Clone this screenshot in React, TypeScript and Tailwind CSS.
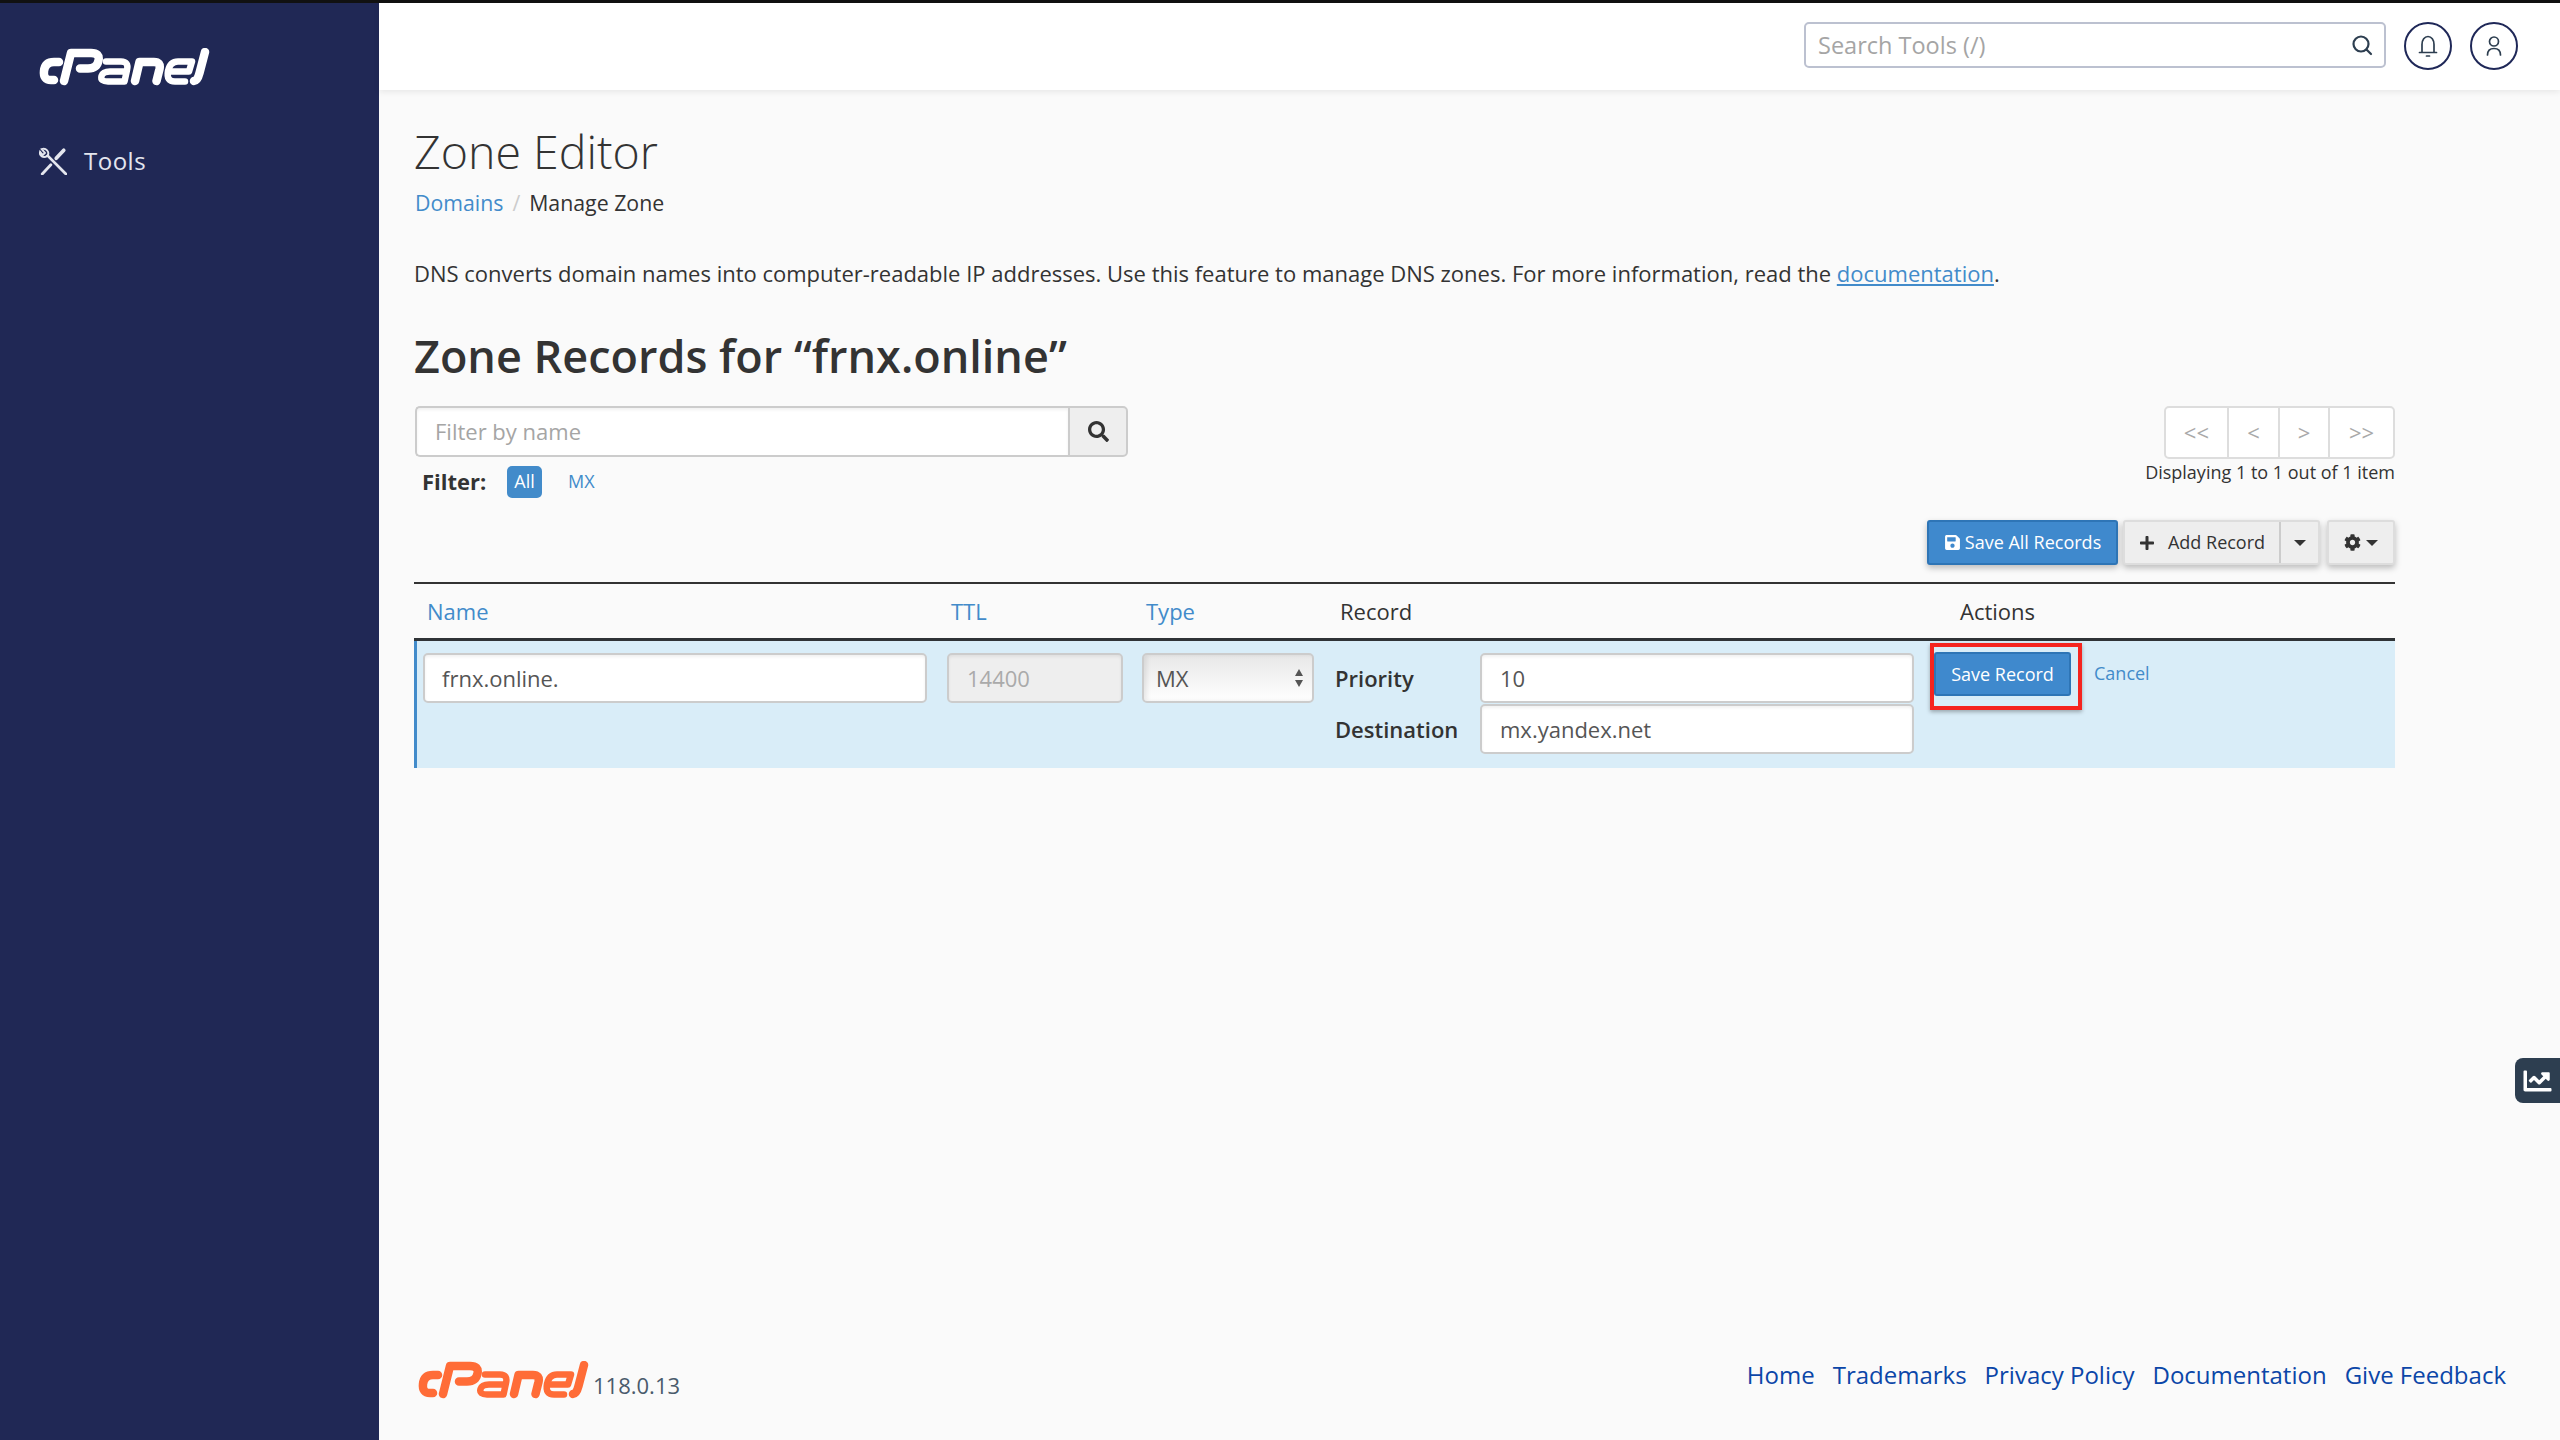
import { FaChartLine, FaCog, FaPlus, FaSave, FaSearch } from "react-icons/fa";

// hand drawn cPanel wordmark, sized for 171x38
function CpanelLogo({ color }: { color: string }) {
  return (
    <svg viewBox="0 0 171 38" className="w-[171px] h-[38px]" role="img" aria-label="cPanel">
      <g fill="none" stroke={color} strokeWidth="8.5" strokeLinecap="round" strokeLinejoin="round">
        {/* c */}
        <path d="M20 14 H15 Q6 14 5 23 Q4 32 12 32 H15" />
        {/* P */}
        <path d="M25 33 L32 5 H52 Q61 5 59.5 12.5 Q58 20.5 49 20.5 H41" />
        {/* a */}
        <path d="M67 13.5 H82 Q90 13.5 88 22 L85.5 33.5 H69 Q61 33.5 62.5 28 Q64 23.5 71 23.5 H86" strokeWidth="6.5" />
        {/* n */}
        <path d="M96 33 L100.5 14 H115 Q122 14 120.5 21 L117.5 33" />
        {/* e */}
        <path d="M153 13.5 H139 Q131 13.5 129 23 Q127 33.5 136 33.5 H146 M133 23.5 H150 L153 13.5" strokeWidth="6.5" />
        {/* l */}
        <path d="M166 4 L160.5 25 Q158.5 33 155 33" />
      </g>
    </svg>
  );
}

function Pager() {
  const items = [
    { label: "<<", w: "w-[64px]" },
    { label: "<", w: "w-[52px]" },
    { label: ">", w: "w-[51px]" },
    { label: ">>", w: "w-[64px]" },
  ];
  return (
    <div className="flex w-[231px] h-[53px] bg-white border-2 border-[#ddd] rounded-[5px]">
      {items.map((it, i) => (
        <div
          key={i}
          className={`${it.w} flex items-center justify-center text-[22px] text-[#a9a9a9] ${i < 3 ? "border-r-2 border-[#ddd]" : ""}`}
        >
          {it.label}
        </div>
      ))}
    </div>
  );
}

export default function App() {
  return (
    <div className="w-[2560px] h-[1440px] flex flex-col overflow-hidden bg-[#fafafa] font-['Open_Sans',sans-serif] text-[#333] relative">
      <div className="h-[3px] bg-[#111] shrink-0" />
      <div className="flex flex-1 min-h-0">
        {/* sidebar */}
        <div className="w-[379px] shrink-0 bg-[#202855] flex flex-col pl-[39px] pt-[45px]">
          <CpanelLogo color="#ffffff" />
          <div className="flex items-center mt-[57px] text-[#e4e6ee] text-[24px] tracking-[0.5px]">
            <svg viewBox="0 0 26 26" className="w-[28px] h-[28px] mr-[17px]" fill="none" stroke="#e4e6ee" strokeWidth="2.6" strokeLinecap="round">
              <path d="M3 25 L11 16.5" />
              <path d="M16 10.5 L23 3" strokeWidth="3.4" />
              <path d="M25 25 L8 8" />
              <path d="M8 8 C10 4.5 6.5 0.5 2.5 2 L5.5 5.5 L3.5 7.5 L1 4.5 C0 8 4 11 8 8 Z" strokeWidth="1.8" />
            </svg>
            Tools
          </div>
        </div>

        <div className="flex-1 flex flex-col min-w-0">
          {/* top bar */}
          <div className="h-[87px] shrink-0 bg-white shadow-[0_2px_6px_rgba(0,0,0,0.08)] flex items-start pt-[19px] pl-[1425px]">
            <div className="w-[582px] h-[46px] rounded-[5px] border-2 border-[#bcc1d0] flex items-center justify-between pl-[12px] pr-[11px]">
              <span className="text-[23.5px] text-[#a5a5a5] pt-[2px]">Search Tools (/)</span>
              <svg viewBox="0 0 22 22" className="w-[22px] h-[22px]" fill="none" stroke="#2d3e50" strokeWidth="2.2" strokeLinecap="round">
                <circle cx="10" cy="10" r="7.5" />
                <path d="M15.5 15.5 L20 20" />
              </svg>
            </div>
            <div className="w-[48px] h-[48px] rounded-full border-2 border-[#1f2858] flex items-center justify-center ml-[18px]">
              <svg viewBox="0 0 24 24" className="w-[24px] h-[24px]" fill="none" stroke="#2d3e50" strokeWidth="1.7" strokeLinecap="round" strokeLinejoin="round">
                <path d="M6 18 V10.5 C6 6 8.5 2.5 12 2.5 C15.5 2.5 18 6 18 10.5 V18 M3.5 18.5 H20.5 M10.5 22 H13.5" />
              </svg>
            </div>
            <div className="w-[48px] h-[48px] rounded-full border-2 border-[#1f2858] flex items-center justify-center ml-[18px]">
              <svg viewBox="0 0 24 24" className="w-[24px] h-[24px]" fill="none" stroke="#2d3e50" strokeWidth="1.7" strokeLinecap="round">
                <circle cx="12" cy="7.5" r="4.5" />
                <path d="M5.5 21 C5.5 17 8 14.5 12 14.5 C16 14.5 18.5 17 18.5 21" />
              </svg>
            </div>
          </div>

          {/* page body */}
          <div className="flex-1 flex flex-col pl-[35px] pr-[165px] relative">
            <h1 className="text-[46.5px] font-light leading-[60px] mt-[31px] text-[#333]">Zone Editor</h1>
            <div className="flex items-center text-[21.3px] leading-[30px] mt-[7px] ml-[1px]">
              <span className="text-[#428bca]">Domains</span>
              <span className="text-[#ccc] mx-[9px]">/</span>
              <span className="text-[#333]">Manage Zone</span>
            </div>
            <p className="text-[22px] leading-[30px] mt-[40px]">
              DNS converts domain names into computer-readable IP addresses. Use this feature to manage DNS zones. For more information, read the{" "}
              <span className="text-[#428bca] underline">documentation</span>.
            </p>
            <h2 className="text-[45px] font-semibold leading-[60px] mt-[38px] text-[#333]">Zone Records for “frnx.online”</h2>

            {/* filter + pager */}
            <div className="flex justify-between mt-[20px] h-[114px]">
              <div>
                <div className="flex w-[713px] h-[51px] ml-[1px]">
                  <div className="w-[653px] bg-white border-2 border-r-0 border-[#ccc] rounded-l-[5px] flex items-center pl-[18px] text-[22px] text-[#a5a5a5] shadow-[inset_0_2px_3px_rgba(0,0,0,0.06)]">
                    Filter by name
                  </div>
                  <div className="flex-1 bg-[#eee] border-2 border-[#ccc] rounded-r-[5px] flex items-center justify-center">
                    <FaSearch className="w-[21px] h-[21px] text-[#333]" />
                  </div>
                </div>
                <div className="flex items-center mt-[8px] ml-[8px]">
                  <span className="text-[22px] font-bold w-[85px]">Filter:</span>
                  <span className="w-[35px] h-[32px] rounded-[5px] bg-[#428bca] text-white text-[18px] flex items-center justify-center">All</span>
                  <span className="ml-[26px] text-[18px] text-[#428bca]">MX</span>
                </div>
              </div>
              <div className="flex flex-col items-end">
                <Pager />
                <div className="text-[18px] leading-[26px]">Displaying 1 to 1 out of 1 item</div>
              </div>
            </div>

            {/* toolbar */}
            <div className="flex justify-end h-[46px] text-[18px]">
              <div className="w-[191px] h-[45px] rounded-[3px] bg-[#3f89cd] border-2 border-[#2e75b6] text-white flex items-center justify-center shadow-[0_3px_6px_rgba(0,0,0,0.25)]">
                <FaSave className="w-[17px] h-[17px] mr-[4px]" />
                Save All Records
              </div>
              <div className="flex ml-[5px] w-[197px] h-[45px] rounded-[3px] bg-[#eee] border-2 border-[#ddd] shadow-[0_3px_6px_rgba(0,0,0,0.25)]">
                <div className="flex-1 flex items-center justify-center border-r-2 border-[#ccc]">
                  <FaPlus className="w-[16px] h-[16px] mr-[13px]" />
                  Add Record
                </div>
                <div className="w-[37px] flex items-center justify-center">
                  <span className="w-0 h-0 border-x-[6px] border-x-transparent border-t-[6px] border-t-[#333]" />
                </div>
              </div>
              <div className="flex items-center justify-center ml-[7px] w-[68px] h-[45px] rounded-[3px] bg-[#eee] border-2 border-[#ddd] shadow-[0_3px_6px_rgba(0,0,0,0.25)]">
                <FaCog className="w-[17px] h-[17px] mr-[5px]" />
                <span className="w-0 h-0 border-x-[6px] border-x-transparent border-t-[6px] border-t-[#333]" />
              </div>
            </div>

            {/* table */}
            <div className="mt-[16px] border-t-2 border-[#333]">
              <div className="flex h-[57px] items-center text-[22px] border-b-[3px] border-[#2f3336]">
                <div className="w-[525px] pl-[13px] text-[#428bca]">Name</div>
                <div className="w-[195px] pl-[12px] text-[#428bca]">TTL</div>
                <div className="w-[193px] pl-[12px] text-[#428bca]">Type</div>
                <div className="w-[626px] pl-[13px]">Record</div>
                <div className="pl-[7px]">Actions</div>
              </div>
              <div className="flex h-[127px] bg-[#d9edf8] border-l-[3px] border-[#428bca] pt-[12px] text-[22px]">
                <div className="w-[524px] pl-[6px]">
                  <div className="w-[504px] h-[50px] bg-white border-2 border-[#ccc] rounded-[5px] flex items-center pl-[17px] text-[#555] shadow-[inset_0_2px_3px_rgba(0,0,0,0.06)]">frnx.online.</div>
                </div>
                <div className="w-[195px] pl-[6px]">
                  <div className="w-[176px] h-[50px] bg-[#eee] border-2 border-[#ccc] rounded-[5px] flex items-center pl-[18px] text-[#aaa] shadow-[inset_0_2px_3px_rgba(0,0,0,0.06)]">14400</div>
                </div>
                <div className="w-[193px] pl-[6px]">
                  <div className="w-[172px] h-[50px] bg-gradient-to-b from-[#e8e8e8] to-white border-2 border-[#ccc] rounded-[5px] flex items-center justify-between pl-[12px] pr-[8px] text-[#555] shadow-[inset_3px_0_4px_rgba(0,0,0,0.08)]">
                    MX
                    <svg viewBox="0 0 10 20" className="w-[10px] h-[20px]" fill="#555">
                      <path d="M5 1 L9 8 H1 Z M5 19 L9 12 H1 Z" />
                    </svg>
                  </div>
                </div>
                <div className="w-[605px] grid grid-cols-[145px_434px] gap-y-[1px] self-start pl-[6px] items-center">
                  <div className="font-semibold">Priority</div>
                  <div className="h-[50px] bg-white border-2 border-[#ccc] rounded-[5px] flex items-center pl-[18px] text-[#555] shadow-[inset_0_2px_3px_rgba(0,0,0,0.06)]">10</div>
                  <div className="font-semibold">Destination</div>
                  <div className="h-[50px] bg-white border-2 border-[#ccc] rounded-[5px] flex items-center pl-[18px] text-[#555] shadow-[inset_0_2px_3px_rgba(0,0,0,0.06)]">mx.yandex.net</div>
                </div>
                <div className="flex items-start -mt-[1px]">
                  <div className="w-[137px] h-[44px] rounded-[3px] bg-[#3f89cd] border-2 border-[#2e75b6] text-white text-[18px] flex items-center justify-center">Save Record</div>
                  <span className="ml-[23px] mt-[8px] text-[18px] text-[#428bca]">Cancel</span>
                </div>
              </div>
            </div>
          </div>

          {/* footer */}
          <div className="h-[83px] shrink-0 flex justify-between pl-[39px] pr-[54px]">
            <div className="flex items-start pt-[4px]">
              <CpanelLogo color="#ff6c37" />
              <span className="text-[22px] text-[#4a5b6c] mt-[8px] ml-[4px]">118.0.13</span>
            </div>
            <div className="flex gap-x-[18px] text-[24px] text-[#0b46a8] leading-[36px]">
              <span>Home</span>
              <span>Trademarks</span>
              <span>Privacy Policy</span>
              <span>Documentation</span>
              <span>Give Feedback</span>
            </div>
          </div>
        </div>
      </div>

      {/* annotation and side tab */}
      <div className="absolute left-[1930px] top-[643px] w-[152px] h-[67px] border-[4px] border-[#f5241f] shadow-[0_2px_4px_rgba(0,0,0,0.3)]" />
      <div className="absolute right-0 top-[1058px] w-[45px] h-[45px] bg-[#2d3e50] rounded-l-[8px] flex items-center justify-center">
        <FaChartLine className="w-[31px] h-[28px] text-white" />
      </div>
    </div>
  );
}
